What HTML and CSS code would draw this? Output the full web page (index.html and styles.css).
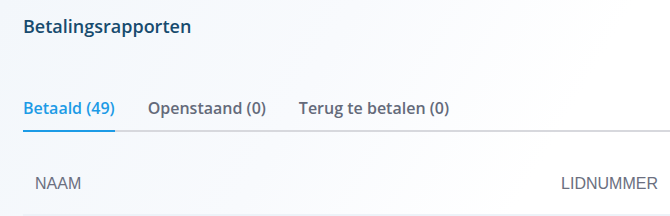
FILE: index.html
```html
<!DOCTYPE html>
<html lang="nl">

<head>
  <meta charset="UTF-8" />
  <meta name="viewport" content="width=device-width, initial-scale=1.0" />
  <title>Betalingsrapporten</title>
  <link rel="stylesheet" href="styles.css">
</head>

<body>
  <div class="panel">
    <h2 class="title">Betalingsrapporten</h2>

    <!-- tabs -->
    <div class="tabs">
      <span class="tab active">Betaald (49)</span>
      <span class="tab">Openstaand (0)</span>
      <span class="tab">Terug te betalen (0)</span>
    </div>

    <!-- table head -->
    <div class="table-head">
      <span>Naam</span>
      <span>Lidnummer</span>
    </div>
  </div>
</body>

</html>
```

FILE: styles.css
```css
* {
  box-sizing: border-box;
}

body {
  margin: 0;
  height: 216px;
  overflow: hidden;
  font-family: "Open Sans", sans-serif;
  background: linear-gradient(120deg, #f3f7fb 0%, #f8fafd 45%, #ffffff 80%);
}

.panel {
  padding: 14px 0 0 23px;
}

/* page heading */
.title {
  margin: 0;
  font-size: 18px;
  font-weight: 600;
  line-height: 24px;
  color: #174b6e;
}

/* tab strip */
.tabs {
  display: flex;
  gap: 33px;
  margin-top: 60px;
  border-bottom: 2px solid #d7d8dd;
}

.tab {
  font-size: 16px;
  font-weight: 600;
  line-height: 20px;
  color: #646a7a;
  padding-bottom: 12px;
  margin-bottom: -2px;
  border-bottom: 2px solid transparent;
}

.tab.active {
  color: #1c9be6;
  border-bottom-color: #1c9be6;
}

/* table header */
.table-head {
  display: flex;
  justify-content: space-between;
  margin-top: 44px;
  padding: 0 12px;
  height: 40px;
  border-bottom: 2px solid #edf2f8;
  font-family: "Liberation Sans", Arial, sans-serif;
  font-size: 16px;
  line-height: 16px;
  text-transform: uppercase;
  color: #6b6f80;
}
```
